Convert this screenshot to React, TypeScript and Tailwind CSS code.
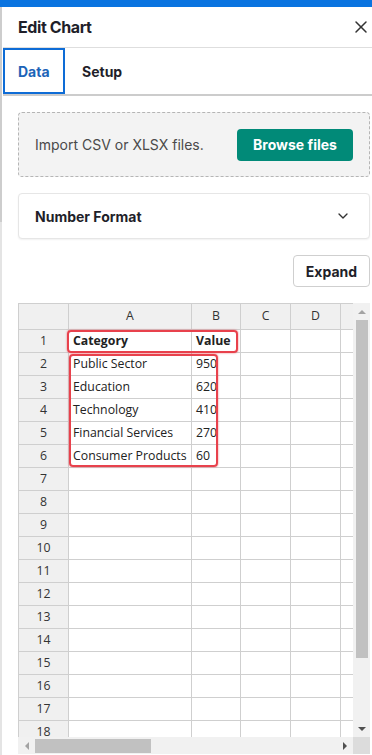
import React from 'react';
import { X, ChevronDown } from 'lucide-react';

const cols = ['A', 'B', 'C', 'D', ''];
const data: Record<number, [string, string]> = {
    1: ['Category', 'Value'],
    2: ['Public Sector', '950'],
    3: ['Education', '620'],
    4: ['Technology', '410'],
    5: ['Financial Services', '270'],
    6: ['Consumer Products', '60'],
};

const Sheet: React.FC = () => {
    const rows = Array.from({ length: 18 }, (_, i) => i + 1);
    return (
        <div className="flex flex-col w-[352px] h-[451px] bg-white" style={{ fontFamily: '"Open Sans", sans-serif' }}>
            <div className="flex flex-1 min-h-0">
                <div className="relative flex-1 overflow-hidden">
                    <div className="grid grid-cols-[50px_123px_49px_50px_50px_50px] grid-rows-[26px] auto-rows-[23px] w-[372px] text-[12.3px] text-[#222]">
                        {/* header row */}
                        <div className="bg-[#f0f0f0] border-l border-t border-[#cfcfcf]" />
                        {cols.map((c, i) => (
                            <div key={i} className="bg-[#f0f0f0] border-l border-t border-[#cfcfcf] flex items-center justify-center text-[#333]">
                                {c}
                            </div>
                        ))}
                        {rows.map((r) => (
                            <React.Fragment key={r}>
                                <div className="bg-[#f0f0f0] border-l border-t border-[#cfcfcf] flex items-center justify-center text-[#333]">{r}</div>
                                {cols.map((c, ci) => (
                                    <div
                                        key={ci}
                                        className={`border-l border-t border-[#cfcfcf] flex items-center pl-[4px] whitespace-nowrap overflow-hidden ${r === 1 ? 'font-bold' : ''}`}
                                    >
                                        {ci < 2 && data[r] ? data[r][ci] : ''}
                                    </div>
                                ))}
                            </React.Fragment>
                        ))}
                    </div>
                    {/* selection highlights */}
                    <div className="absolute left-[49px] top-[27px] w-[171px] h-[23px] border-2 border-[#e8414c] rounded-[4px] shadow-[0_0_2px_rgba(232,49,63,0.7)]" />
                    <div className="absolute left-[51px] top-[51px] w-[149px] h-[113px] border-2 border-[#e8414c] rounded-[4px] shadow-[0_0_2px_rgba(232,49,63,0.7)]" />
                </div>
                {/* vertical scrollbar */}
                <div className="w-[17px] bg-[#f1f1f1] flex flex-col items-center">
                    <div className="h-[17px] flex items-center justify-center">
                        <div className="w-0 h-0 border-l-[4px] border-r-[4px] border-b-[4px] border-l-transparent border-r-transparent border-b-[#a3a3a3]" />
                    </div>
                    <div className="w-[12px] h-[338px] bg-[#c1c1c1]" />
                    <div className="flex-1" />
                    <div className="h-[17px] flex items-center justify-center">
                        <div className="w-0 h-0 border-l-[4px] border-r-[4px] border-t-[4px] border-l-transparent border-r-transparent border-t-[#505050]" />
                    </div>
                </div>
            </div>
            {/* horizontal scrollbar */}
            <div className="flex h-[17px]">
                <div className="flex-1 bg-[#f1f1f1] flex items-center">
                    <div className="w-[17px] flex items-center justify-center">
                        <div className="w-0 h-0 border-t-[4px] border-b-[4px] border-r-[4px] border-t-transparent border-b-transparent border-r-[#a3a3a3]" />
                    </div>
                    <div className="w-[116px] h-[14px] bg-[#c1c1c1]" />
                    <div className="flex-1" />
                    <div className="w-[17px] flex items-center justify-center">
                        <div className="w-0 h-0 border-t-[4px] border-b-[4px] border-l-[4px] border-t-transparent border-b-transparent border-l-[#505050]" />
                    </div>
                </div>
                <div className="w-[17px] bg-[#dcdcdc]" />
            </div>
        </div>
    );
};

const App: React.FC = () => {
    return (
        <div className="w-[372px] h-[755px] bg-white overflow-hidden flex flex-col" style={{ fontFamily: 'Inter, "Liberation Sans", sans-serif' }}>
            <div className="h-[7px] bg-[#0a74e0] shrink-0" />
            <div className="flex flex-1 min-h-0">
                {/* left gutter */}
                <div className="w-[3px] flex flex-col shrink-0">
                    <div className="h-[215px] w-[2px] bg-[#cdcdcd]" />
                    <div className="flex-1 w-[2px] bg-[#e4e4e4]" />
                </div>

                <div className="flex-1 flex flex-col min-w-0">
                    {/* header */}
                    <div className="h-[41px] flex items-center justify-between pl-[15px] pr-[1px] border-b border-[#dedede]">
                        <h1 className="text-[16px] font-bold text-[#1f1f2a] tracking-tight">Edit Chart</h1>
                        <X className="w-[20px] h-[20px] text-[#333]" strokeWidth={1.8} />
                    </div>

                    {/* tabs */}
                    <div className="h-[48px] flex items-end border-b-2 border-[#cccccc]">
                        <div className="h-[46px] w-[62px] border-2 border-[#0e6cd6] flex items-center pl-[13px] text-[14px] font-bold text-[#1c64b8]">
                            Data
                        </div>
                        <div className="h-[46px] flex items-center pl-[17px] text-[14px] font-bold text-[#1f1f2a]">Setup</div>
                    </div>

                    {/* content */}
                    <div className="flex flex-col pl-[15px] pr-[2px] pt-[16px]">
                        <div className="h-[65px] flex items-center justify-between bg-[#f3f3f3] border border-dashed border-[#b5b5b5] rounded-[4px] pl-[16px] pr-[16px]">
                            <span className="text-[14px] text-[#4a4a4a]">Import CSV or XLSX files.</span>
                            <button className="h-[32px] w-[116px] bg-[#018a78] text-white text-[14px] font-bold rounded-[4px]">
                                Browse files
                            </button>
                        </div>

                        <div className="mt-[16px] h-[46px] flex items-center justify-between bg-white border border-[#e6e6e6] rounded-[4px] shadow-[0_1px_2px_rgba(0,0,0,0.06)] pl-[16px] pr-[18px]">
                            <span className="text-[14px] font-bold text-[#1f1f2a]">Number Format</span>
                            <ChevronDown className="w-[16px] h-[16px] text-[#333]" strokeWidth={2} />
                        </div>

                        <div className="mt-[16px] flex justify-end">
                            <button className="h-[32px] w-[77px] border border-[#cfcfcf] rounded-[4px] bg-white text-[14px] font-bold text-[#1f1f2a]">
                                Expand
                            </button>
                        </div>

                        <div className="mt-[16px]">
                            <Sheet />
                        </div>
                    </div>
                </div>
            </div>
        </div>
    );
};

export default App;
